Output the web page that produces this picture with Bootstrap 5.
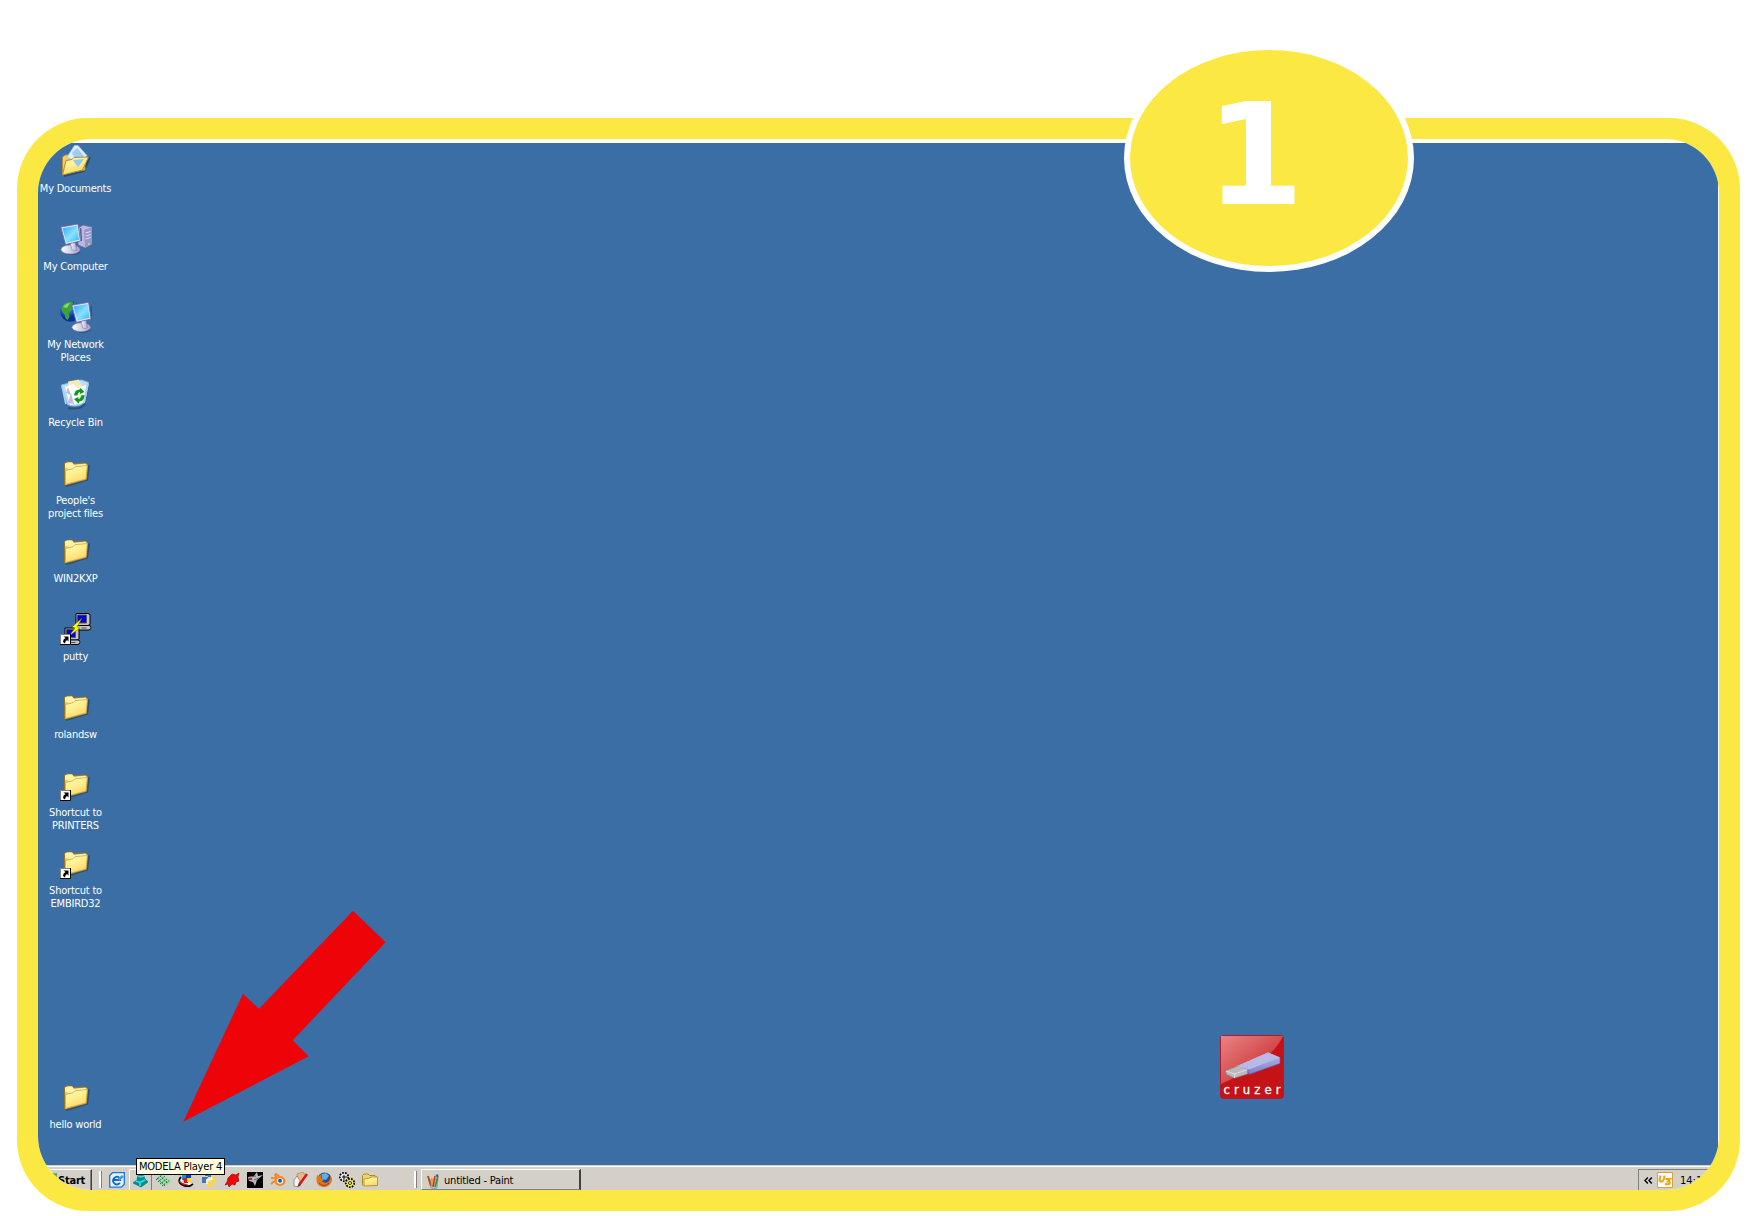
<!DOCTYPE html>
<html lang="en">
<head>
<meta charset="utf-8">
<title>Step 1</title>
<link href="https://cdn.jsdelivr.net/npm/bootstrap@5.3.0/dist/css/bootstrap.min.css" rel="stylesheet">
<style>
body{width:1757px;height:1216px;overflow:hidden;background:#fff;color:#fff;font:11px/13px "DejaVu Sans Condensed","DejaVu Sans",sans-serif;font-stretch:condensed}
svg{display:block;flex:none}
.stage{width:1757px;height:1216px;padding:118px 17px 5px}
.frame{background:#fce843;border-radius:71px;padding:21px}
.screen{background:#fff;border-radius:54px;padding:4px 1px 0 0}
.desk{background:#3a6ea5}
.icons{width:76px;padding-top:2px}
.item{height:78px}
.item span{margin:5px 1px 0 0;white-space:nowrap;letter-spacing:-.22px}
.gap-row{height:156px}
.bar{height:25px;background:#d4d0c8;color:#000;box-shadow:inset 0 1px #d4d0c8,inset 0 2px #fff;padding-top:4px}
.start{width:54px;border-top:1px solid #fff;border-right:1px solid #404040;box-shadow:inset -1px 0 #808080;font-weight:bold;padding:4px 0 0 20px;letter-spacing:-.2px}
.grip{width:3px;height:17px;margin:2px 0 0 7px;border-left:2px solid #fff;border-right:1px solid #808080}
.grip.second{margin-left:32px}
.ql{width:23px;padding:3px 0 0 3px}
.ql.hot{border-top:1px solid #fff;border-left:1px solid #fff;border-right:1px solid #808080;padding:2px 0 0 2px}
.task{width:160px;border:1px solid;border-width:1px 2px 1px 1px;border-color:#fff #404040 #808080 #fff;padding:4px 0 0 4px;letter-spacing:-.2px}
.task span{margin-left:3px}
.tray{width:80px;border-top:1px solid #808080;border-left:1px solid #808080;padding:2px 0 0 5px}
.tray span{margin:2px 0 0 7px}
.tip{left:136px;top:1158px;width:89px;height:17px;border:1px solid #000;background:#ffffe1;color:#000;line-height:16px;text-align:center;white-space:nowrap;letter-spacing:-.2px}
.num{left:1124px;top:44px;width:290px;height:228px;border:6px solid #fff;border-radius:50%;background:#fce843;font:bold 141px/211px "DejaVu Sans",sans-serif;padding-left:76px;overflow:hidden}
.arrow{left:0;top:0}
.cruzer{left:1220px;top:1035px}
</style>
<script src="https://cdn.jsdelivr.net/npm/bootstrap@5.3.0/dist/js/bootstrap.bundle.min.js"></script>
</head>
<body>
<svg width="0" height="0" class="position-absolute">
<defs>
<linearGradient id="gf" x1="0" y1="0" x2=".5" y2="1"><stop offset="0" stop-color="#fffdb8"/><stop offset=".5" stop-color="#fff08e"/><stop offset="1" stop-color="#fad56c"/></linearGradient>
<linearGradient id="gs" x1="0" y1="0" x2="1" y2="1"><stop offset="0" stop-color="#2ba6ff"/><stop offset=".55" stop-color="#86e4ff"/><stop offset="1" stop-color="#36b0ff"/></linearGradient>
<radialGradient id="gg" cx=".35" cy=".3"><stop offset="0" stop-color="#7fc8ff"/><stop offset=".5" stop-color="#2a70e0"/><stop offset="1" stop-color="#0a2f96"/></radialGradient>
<linearGradient id="gb"><stop offset="0" stop-color="#fff"/><stop offset="1" stop-color="#a5a1cd"/></linearGradient>
<linearGradient id="gr" x1="0" y1="0" x2="1" y2="1"><stop offset="0" stop-color="#e88484"/><stop offset="1" stop-color="#c41a1c"/></linearGradient>
<linearGradient id="gu" x1="0" y1="0" x2="0" y2="1"><stop offset="0" stop-color="#b8b8ea"/><stop offset="1" stop-color="#8080c4"/></linearGradient>
<symbol id="folder" viewBox="0 0 32 32"><path d="M6 29l21-6.300 2-14" fill="none" stroke="#1f3f63" stroke-width="2" opacity=".65"/><path d="M4.500 8V6.500q1-1.500 3-1.500h4q1.500 0 2.500 2L25 6q2.500 0 2.500 2.500L26.500 22.500 6 28H4.500z" fill="#f0c860" stroke="#94711f" stroke-width=".9"/><path d="M5 10.500V7Q6 5.500 8 5.500h4l2 2.500 12-1.200-.3 3L13 13.500z" fill="#fff3a8"/><path d="M5.500 27.500V13.500l7.500-1.800 2-2L27.300 8.500 26 22z" fill="url(#gf)" stroke="#d0a644" stroke-width=".8"/></symbol>
<symbol id="link" viewBox="0 0 32 32"><path d="M.5 21.500h10v10H.5z" fill="#fff" stroke="#808080"/><path d="M0 31.500h10.500v-10.500" fill="none" stroke="#000"/><path d="M3.500 23.500H8.500v5L7 27q-2 1-2 3.500L3 29q0-3 2.500-4z" fill="#000"/></symbol>
<symbol id="mon" viewBox="0 0 22 32"><path d="M8 31q6 2 12-2M20.500 5l1 13" stroke="#284568" stroke-width="1.500" fill="none" opacity=".7"/><ellipse cx="10.500" cy="26.500" rx="9.500" ry="4.500" fill="url(#gb)" stroke="#8581ad" stroke-width=".6"/><path d="M10 19h5l2 8q-3 2-5 0z" fill="url(#gb)" stroke="#7e7aa8" stroke-width=".6"/><path d="M.8 4L18 1l2.500 17-15 3.500z" fill="#e6e6f4" stroke="#6765a0" stroke-width=".8"/><path d="M2.500 5.200L17 2.700l2 14-12.600 3z" fill="url(#gs)"/></symbol>
<symbol id="pc" viewBox="0 0 19 19"><path d="M3.500 1.500h12l2 1v10l-2 1h-12z" fill="#c6c6c6" stroke="#000"/><path d="M5 3h9v8H5z" fill="#0000d8" stroke="#555"/><path d="M1.500 13.500h15l2 1v2l-2 1.500h-15z" fill="#c6c6c6" stroke="#000"/><path d="M9 16h5" stroke="#555"/></symbol>
</defs>
</svg>

<div class="stage">
<main class="frame d-flex h-100">
<div class="screen d-flex flex-column flex-grow-1 overflow-hidden">
  <section class="desk flex-grow-1">
    <div class="icons d-flex flex-column text-center">
      <div class="item d-flex flex-column align-items-center"><svg width="32" height="32"><path d="M4 31l20-5 6-14" stroke="#1f3f63" stroke-width="2" fill="none" opacity=".7"/><path d="M2.500 29V12l2.500-2h5l2 2 13-2v15z" fill="#f3cd68" stroke="#b98b2c"/><path d="M7 12L14.500.5 18 .5l9 10-7 9z" fill="#d9effc" stroke="#9cc6e8" stroke-width=".7"/><path d="M12 8l5-5 7 8-7 6z" fill="#9bcdf2"/><path d="M2.500 30L6 15.500l6-1 2-2 14.500-.5-6 13z" fill="url(#gf)" stroke="#b98b2c"/><path d="M13 15l11-1-6 8z" fill="#8ec9f2"/></svg><span>My Documents</span></div>
      <div class="item d-flex flex-column align-items-center"><svg width="32" height="32"><path d="M18 5l5-3 9 2v17l-7 4-7-3z" fill="#bcb9e0" stroke="#6b689c" stroke-width=".8"/><path d="M24 7l8-3v17l-7 4z" fill="#9a96c8"/><path d="M25.500 10l5-1.500M25.500 13l5-1.500M25.500 16l5-1.500" stroke="#dedef4"/><circle cx="29" cy="21" r="1" fill="#b5e03a"/><use href="#mon" width="22" height="32"/></svg><span>My Computer</span></div>
      <div class="item d-flex flex-column align-items-center"><svg width="32" height="32"><circle cx="10.500" cy="10.500" r="10.300" fill="url(#gg)"/><path d="M1.500 7q3.500-6 9-6.500l3 1.500-3 3 1 4-3 3 1 4-2 3q-3-2-2.500-5-3.500-3-3.500-7zM14 1l6 5-4 2z" fill="#3da534"/><path d="M3 6q3-4 7-4l-3 5z" fill="#8bd85a"/><use href="#mon" x="11" y="0" width="21.500" height="32"/></svg><span>My Network<br>Places</span></div>
      <div class="item d-flex flex-column align-items-center"><svg width="32" height="32"><path d="M8 29q12 2 16-3l4-20" fill="none" stroke="#1f3f63" stroke-width="2" opacity=".6"/><path d="M1.500 6l8-2 12-3 7 2.500-4 20q-8 6-17 2z" fill="#bddef5" stroke="#8fbde3"/><path d="M8 2.500L19 .5l3 7-13 3z" fill="#fbe9b5"/><path d="M5 8l8-3 5 4 8-3-3 18-13 2z" fill="#fff"/><path d="M8 8l3 8-5-2zM11 14l3 11-6-1z" fill="#bdbde4"/><path d="M2 7l4 18M28 5l-4 19" stroke="#a9d0ef" stroke-width="1.800"/><path d="M14 16.500q.5-6 5.500-6l1-1.500 4 4-4.500 2v-2q-2 0-2.500 3.500zM24.500 16q-.5 6.500-5 6.500l-1 2-4.500-4.500 4.500-2v2q2 0 2.500-3.500z" fill="#0c9a18"/></svg><span>Recycle Bin</span></div>
      <div class="item d-flex flex-column align-items-center"><svg width="32" height="32"><use href="#folder"/></svg><span>People's<br>project files</span></div>
      <div class="item d-flex flex-column align-items-center"><svg width="32" height="32"><use href="#folder"/></svg><span>WIN2KXP</span></div>
      <div class="item d-flex flex-column align-items-center"><svg width="32" height="32"><use href="#pc" x="12.500" y="-1" width="19" height="19"/><use href="#pc" x="1.500" y="13.500" width="19" height="19"/><path d="M22 5l-10 9 3 1-6 8 11-8-3-1z" fill="#ff0" stroke="#6b6b00" stroke-width=".5"/><use href="#link"/></svg><span>putty</span></div>
      <div class="item d-flex flex-column align-items-center"><svg width="32" height="32"><use href="#folder"/></svg><span>rolandsw</span></div>
      <div class="item d-flex flex-column align-items-center"><svg width="32" height="32"><use href="#folder"/><use href="#link"/></svg><span>Shortcut to<br>PRINTERS</span></div>
      <div class="item d-flex flex-column align-items-center"><svg width="32" height="32"><use href="#folder"/><use href="#link"/></svg><span>Shortcut to<br>EMBIRD32</span></div>
      <div class="gap-row"></div>
      <div class="item d-flex flex-column align-items-center"><svg width="32" height="32"><use href="#folder"/></svg><span>hello world</span></div>
    </div>
  </section>
  <footer class="bar d-flex">
    <div class="start position-relative">Start<svg class="position-absolute top-0 start-0" width="20" height="20"><path d="M5 4l14-1v13H5z" fill="#62b22f"/></svg></div>
    <div class="grip"></div>
    <div class="d-flex ms-1">
      <div class="ql"><svg width="16" height="16"><path d="M3.500.700h11.800v11.500l-2.800 3H.7V3.500z" fill="#e4f2ff" stroke="#1e78d0" stroke-width="1.300"/><path d="M11 11q-3.500 3-6 0t1-5.500 5 2.500H4.500" stroke="#1565c5" stroke-width="1.900" fill="none"/><path d="M9 6l4-3 2 2-5 4z" fill="#4a9be8"/></svg></div>
      <div class="ql hot"><svg width="16" height="16"><path d="M1 11l4-3 1-5 5-1 2 5 3 3-7 5z" fill="#078f98" stroke="#056872" stroke-width=".6"/><path d="M4 9l4 1.500L13 8M6 4l3 1 3-1M8 11v3" stroke="#35e2e2" fill="none" stroke-width="1.500"/></svg></div>
      <div class="ql"><svg width="17" height="16"><path d="M0 7l6-5 10 6v3l-7 4z" fill="#b4d2b4"/><path d="M1 8l6-5M3 10l7-6M5 12l7-5M7 14l8-6M2 6l8 8M5 4l8 7" stroke="#157b2d" stroke-dasharray="1.500 1"/></svg></div>
      <div class="ql"><svg width="16" height="16"><path d="M3 5q-3 3-1 6 4 4 10 3l3-2" stroke="#000" stroke-width="1.800" fill="#eee"/><path d="M4 1h4v7H4z" fill="#129ac0"/><path d="M8 1h5v6H8z" fill="#1236c9"/><path d="M5 6h5v5H6z" fill="#e11414"/><path d="M9 6h4v4H9z" fill="#ffe11e"/><path d="M1 9q4 4 9 4" stroke="#c22" stroke-width="1.200" fill="none"/></svg></div>
      <div class="ql"><svg width="16" height="16"><path d="M4 1h6v6H5v4H1V5h6V4H4z" fill="#3f77ab"/><path d="M12 15H6V9l5-1V4h4v7H9v1h3z" fill="#ffd445"/><path d="M7.500 5h4v3l-5 1v3H5V8z" fill="#fff" opacity=".8"/></svg></div>
      <div class="ql"><svg width="16" height="16"><path d="M4 6l4-4 4 1 3-2-1 4 1 4-3 1-1 3-3-1-3 3-1-3-3 1 2-3z" fill="#ee0808" stroke="#8d0000" stroke-width=".6"/></svg></div>
      <div class="ql"><svg width="16" height="16"><path d="M0 0h16v16H0z"/><path d="M1 5l6-1 3-4 1 4 5-1-6 5-2 6-2-4-4-1z" fill="#b9b9bf"/><path d="M7 8l5-2M3 5l6-1" stroke="#666"/><path d="M2 6h3v2H2z" fill="#e11"/></svg></div>
      <div class="ql"><svg width="16" height="16"><path d="M1 6h6L5 3l1-1 7 5M1 12l7-6" stroke="#ee8a2b" stroke-width="1.800" fill="none"/><ellipse cx="10" cy="9" rx="4.300" ry="3.800" fill="#fff" stroke="#ee8a2b" stroke-width="2.300"/><circle cx="10" cy="8.800" r="2" fill="#195aa5"/></svg></div>
      <div class="ql"><svg width="16" height="16"><path d="M4 2l6-2 3 4-5 8-4-4z" fill="#edb884" stroke="#8b8170" stroke-width=".6"/><path d="M1 8l3-4 3 5-1 6-5-1z" fill="#f4f4f4" stroke="#777" stroke-width=".7"/><path d="M14 2L6 13" stroke="#d81616" stroke-width="2.400"/><path d="M6 12l-2 3 4-2z" fill="#333"/></svg></div>
      <div class="ql"><svg width="16" height="16"><circle cx="8.500" cy="7.500" r="7" fill="#234f98"/><path d="M6 2l4-1 3 3-3 4-4-1z" fill="#5faee5"/><path d="M1 3l2 1 3-2-1 4 3 2-2 1q2 3 6 1 3-2 2-7 3 4 1 8-3 4-7 4-5 0-7-4-1-4 0-8z" fill="#e3761b"/><path d="M3 11q5 5 10 0" stroke="#a63d0c" fill="none"/></svg></div>
      <div class="ql"><svg width="16" height="16"><circle cx="5" cy="5" r="4.200" fill="#eee" stroke="#000" stroke-width="1.800" stroke-dasharray="1.700 1.200"/><path d="M3 5h5M5 3v5" stroke="#000"/><circle cx="11" cy="11" r="4.200" fill="#f5ed39" stroke="#000" stroke-width="1.800" stroke-dasharray="1.700 1.200"/><circle cx="11" cy="11" r="1.500" fill="#fff" stroke="#000" stroke-width=".8"/></svg></div>
      <div class="ql"><svg width="17" height="16"><path d="M.5 13V3.500L2 2h4l1.500 1.500H13L14.500 5v8.500h-13z" fill="#f2d36b" stroke="#b18a24"/><path d="M2 14V7l6-1 1-1h6.500v8.500z" fill="url(#gf)" stroke="#b18a24" stroke-width=".8"/></svg></div>
    </div>
    <div class="grip second"></div>
    <div class="task d-flex ms-1"><svg width="15" height="16"><path d="M3 6l9-1-1 9q-3 2-6 0z" fill="#a9c4d0" stroke="#7294a8" stroke-width=".7"/><path d="M5 12L2 2" stroke="#bb4f18" stroke-width="2"/><path d="M6 12V4" stroke="#eaa22c" stroke-width="1.600"/><path d="M7 13l2-11" stroke="#dc2d22" stroke-width="1.500"/><path d="M9 13l3-11" stroke="#3e8d45" stroke-width="1.700"/><path d="M10 2l2-1" stroke="#2e5fba" stroke-width="2"/></svg><span>untitled - Paint</span></div>
    <div class="tray d-flex ms-auto"><svg width="9" height="16"><path d="M3.800 5.500L1 8.500l2.800 3M7.800 5.500L5 8.500l2.800 3" fill="none" stroke="#000" stroke-width="1.400"/></svg><svg width="16" height="16" class="ms-1"><path d="M.5.500h15v15H.5z" fill="#fff" stroke="#d6a136"/><path d="M3.500 3.500L2.500 8q.5 2 2.500 1.500T7.500 3.500M8.500 7H13l-2 2.300q2.500 0 1.500 2.400-2 1-4.500.3" fill="none" stroke="#eda61c" stroke-width="2.200"/></svg><span>14:16</span></div>
  </footer>
</div>
</main>
</div>

<svg class="arrow position-absolute pe-none" width="400" height="1130"><path d="M353 910.700L385.600 942.300 292.700 1040.300 308.700 1056.300 183.300 1121.700 243 993.700 259 1008.700z" fill="#ee0408"/></svg>
<svg class="cruzer position-absolute" width="64" height="64"><rect x=".5" y=".5" width="63" height="63" rx="3" fill="#c41216" stroke="#b01a2c"/><path d="M1 1h62Q52 26 1 49z" fill="url(#gr)"/><path d="M5.500 36l13-5.500 9 3.500v5l-13 4-8-3.500z" fill="#b9b9bf" stroke="#88888e" stroke-width=".7"/><path d="M6 36l8.500 3 13-4.500M14.500 39v4" fill="none" stroke="#e4e4e8" stroke-width=".8"/><path d="M17 31l31-13.500 12 5v6L29 39.500l-2-5z" fill="url(#gu)"/><path d="M17 31l31-13.500 12 5-31 12z" fill="#b9b9e8"/><path d="M29 34.500v5l31-11v-6" fill="none" stroke="#5c5ca8" stroke-width=".7"/><text x="3.500" y="59" textLength="57" fill="#fff" stroke="#fff" stroke-width=".3" font-family="DejaVu Sans" font-size="13">cruzer</text></svg>
<div class="tip position-absolute">MODELA Player 4</div>
<div class="num position-absolute">1</div>
</body>
</html>
